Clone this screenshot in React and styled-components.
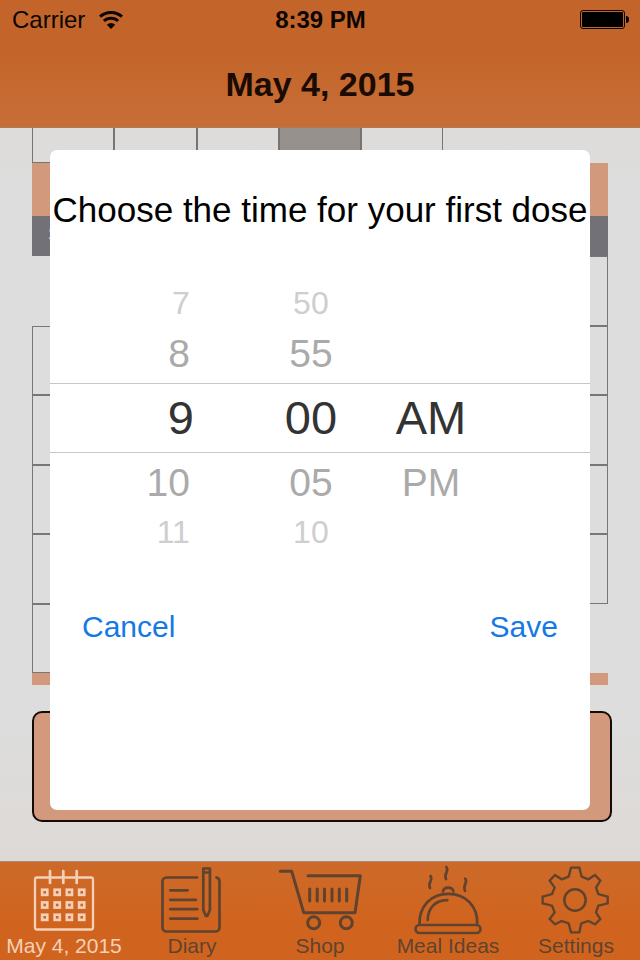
import React, { useState } from "react";
import styled, { createGlobalStyle } from "styled-components";

const GlobalStyle = createGlobalStyle`
  *,
  *::before {
    box-sizing: border-box;
  }
  body {
    margin: 0;
    font-family: "Liberation Sans", Arial, sans-serif;
  }
  button {
    padding: 0;
    border: none;
    background: none;
    font-family: inherit;
    cursor: pointer;
  }
`;

const Screen = styled.div`
  position: relative;
  display: flex;
  flex-direction: column;
  min-height: 100vh;
  background: linear-gradient(#ded9d5, #dddddd 20%, #dddddd 75%, #ded9d5 90%);
`;
const Header = styled.header`
  height: 128px;
  background: linear-gradient(#c3652a 40%, #c76e37);
  border-bottom: 1px solid #b07a58;
`;
const StatusBar = styled.div`
  display: grid;
  grid-template-columns: 1fr auto 1fr;
  align-items: center;
  height: 40px;
  padding: 0 11px 0 12px;
  font-size: 24px;
  color: #0c0502;
`;
const Carrier = styled.div`
  display: flex;
  align-items: center;
  gap: 14px;
`;
const Clock = styled.div`
  font-weight: bold;
`;
const Battery = styled.svg`
  justify-self: end;
`;
const Title = styled.h1`
  margin: 0;
  font-size: 34px;
  line-height: 88px;
  text-align: center;
  color: #1a0b03;
`;

const Main = styled.main`
  flex: 1;
  padding: 0 32px 39px;
`;
const Week = styled.div`
  display: grid;
  grid-template-columns: repeat(7, 1fr);
`;
const WeekCell = styled.div`
  height: 35px;
  border: 1px solid #777472;
  border-top: none;
  background: ${(props) => (props.$selected ? "#96918d" : "transparent")};
`;
const Band = styled.div`
  height: ${(props) => props.$height}px;
  background: #d3997d;
`;
const Weekdays = styled.div`
  height: 40px;
  padding-left: 16px;
  font-size: 20px;
  line-height: 36px;
  color: #dddddd;
  background: #727177;
`;
const Month = styled.div`
  display: grid;
  grid-template-columns: repeat(7, 1fr);
  grid-template-rows: repeat(6, 1fr);
  height: 417px;
`;
const Day = styled.div`
  border: 1px solid #777777;
  &:first-child {
    grid-column-start: 6;
  }
`;
const DoseButton = styled.button`
  display: block;
  width: calc(100% + 4px);
  height: 111px;
  margin-top: 26px;
  border: 2px solid #140b06;
  border-radius: 10px;
  background: #d3997d;
`;

const Modal = styled.div`
  position: absolute;
  top: 150px;
  left: 50px;
  right: 50px;
  padding: 40px 0 165px;
  border-radius: 7px;
  background: #ffffff;
`;
const ModalTitle = styled.h2`
  margin: 0;
  font-size: 35px;
  font-weight: normal;
  line-height: 40px;
  text-align: center;
  white-space: nowrap;
  color: #000000;
`;
const Picker = styled.div`
  position: relative;
  display: grid;
  grid-template-columns: 7fr 140px 100px 4fr;
  margin-top: 53px;
  &::before {
    content: "";
    position: absolute;
    top: 100px;
    left: 0;
    right: 0;
    height: 70px;
    border: solid #c8c8c8;
    border-width: 1px 0;
    pointer-events: none;
  }
`;
const Wheel = styled.div`
  display: flex;
  flex-direction: column;
  padding-right: ${(props) => (props.$align === "right" ? "47px" : "0")};
  text-align: ${(props) => props.$align || "center"};
`;

// rows get smaller and paler away from the selected one
const rowHeight = [70, 59, 41];
const rowFont = [47, 39, 32];
const rowColor = ["#333333", "#aaaaaa", "#cecece"];

const Option = styled.label`
  height: ${(props) => rowHeight[props.$distance]}px;
  padding-right: ${(props) => (props.$indent ? "4px" : "0")};
  font-size: ${(props) => rowFont[props.$distance]}px;
  line-height: ${(props) => rowHeight[props.$distance]}px;
  color: ${(props) => rowColor[props.$distance]};
  cursor: pointer;
`;
const Radio = styled.input`
  position: absolute;
  width: 1px;
  height: 1px;
  margin: 0;
  opacity: 0;
`;
const Actions = styled.div`
  display: flex;
  justify-content: space-between;
  margin-top: 56px;
  padding: 0 32px;
`;
const ActionButton = styled.button`
  font-size: 30px;
  line-height: 36px;
  color: #1479e6;
`;

const TabBar = styled.nav`
  display: grid;
  grid-template-columns: repeat(5, 1fr);
  border-top: 1px solid #a98a76;
  background: linear-gradient(#cd6a29, #d0641f 60%);
`;
const Tab = styled.button`
  display: flex;
  flex-direction: column;
  align-items: center;
  padding-bottom: 4px;
  font-size: 21px;
  line-height: 20px;
  white-space: nowrap;
  color: ${(props) => (props.$active ? "#f5d0b8" : "#5f432f")};
`;
const TabIcon = styled.svg`
  display: block;
  width: 96px;
  height: 74px;
  fill: none;
  stroke: currentColor;
  stroke-width: 2.7;
  stroke-linecap: round;
  stroke-linejoin: round;
`;

function CalendarIcon() {
  return (
    <TabIcon viewBox="0 0 96 74">
      <rect x="19" y="15.5" width="58" height="52" rx="2" strokeWidth="2.3" />
      <path d="M34 9v12M47.3 9v12M60.7 9v12" />
      {[30.3, 43, 55.3].map((y) =>
        [28.7, 41.2, 53.4, 65.7].map((x) => (
          <rect
            key={x + "-" + y}
            x={x - 2.6}
            y={y - 2.6}
            width="5.2"
            height="5.2"
            strokeWidth="2.6"
            strokeLinejoin="miter"
          />
        ))
      )}
    </TabIcon>
  );
}

function DiaryIcon() {
  return (
    <TabIcon viewBox="0 0 96 74">
      <path d="M53 15.500H22.500a4 4 0 0 0-4 4v46a4 4 0 0 0 4 4h49a4 4 0 0 0 4-4v-46q0-3.200-3-4" />
      <path d="M59.3 6.5h6.600v41.500l-2.600 6h-1.400l-2.600-6zM59.300 10.500h6.600" />
      <path d="M26.3 28.3h17.4M26.3 37.8h25.7M26.3 47.2h27M26.3 56.7h27" />
    </TabIcon>
  );
}

function CartIcon() {
  return (
    <TabIcon viewBox="0 0 96 74">
      <path
        d="M8.3 9.2h11.4l12 41.5H83l5.3-37H36"
        strokeWidth="3"
      />
      <path
        d="M37.7 27v12M45.2 27v12M52.5 27v12M60 27v12M67.3 27v12M74.7 27v12"
        strokeWidth="3"
      />
      <circle cx="41.7" cy="60.7" r="6" strokeWidth="3" />
      <circle cx="74.3" cy="60.7" r="6" strokeWidth="3" />
    </TabIcon>
  );
}

function MealIcon() {
  return (
    <TabIcon viewBox="0 0 96 74">
      <rect x="15.5" y="63" width="65" height="8" rx="4" />
      <path d="M19.5 62.5C19 44 31 31.8 48.3 31.8S78 44 77.2 62.5" />
      <path d="M27.7 58C28 46 35 38.4 47.3 38.2" />
      <path d="M43 29.5c0-5.3 10.4-5.3 10.4 0" />
      <path d="M30.5 14c3 4.2-3 6-.5 12M46.3 5c3.5 4.2-3 6-.3 12M65.3 16.7c3 4.2-3 6-.3 12" />
    </TabIcon>
  );
}

function GearIcon() {
  return (
    <TabIcon viewBox="444 21 288 222">
      <path
        d="M573 38h25l7 27 20 8 20-13 16 17-13 21 7 19 28 8v20l-28 7-7 20 13 20-16 16-20-10-21 7-6 27h-25l-7-27-21-7-20 10-16-16 15-20-8-20-28-7v-20l28-8 8-19-15-21 16-17 20 13 21-8z"
        strokeWidth="7"
        strokeLinejoin="miter"
      />
      <circle cx="585" cy="135" r="32" strokeWidth="7.5" />
    </TabIcon>
  );
}

const tabs = [
  { label: "May 4, 2015", Icon: CalendarIcon },
  { label: "Diary", Icon: DiaryIcon },
  { label: "Shop", Icon: CartIcon },
  { label: "Meal Ideas", Icon: MealIcon },
  { label: "Settings", Icon: GearIcon },
];

const hours = ["12", "1", "2", "3", "4", "5", "6", "7", "8", "9", "10", "11"];
const minutes = Array.from({ length: 12 }, (_, i) =>
  String(i * 5).padStart(2, "0")
);
const periods = ["AM", "PM"];

function TimeWheel({ name, values, start, loop, align }) {
  const [selected, setSelected] = useState(start);
  return (
    <Wheel role="radiogroup" aria-label={name} $align={align}>
      {[-2, -1, 0, 1, 2].map((offset) => {
        const distance = Math.abs(offset);
        let index = selected + offset;
        if (loop) index = (index + values.length) % values.length;
        if (!values[index]) {
          return <Option as="div" key={offset} $distance={distance} />;
        }
        return (
          <Option
            key={offset}
            $distance={distance}
            $indent={align === "right" && distance > 0}
          >
            <Radio
              type="radio"
              name={name}
              checked={offset === 0}
              onChange={() => setSelected(index)}
            />
            {values[index]}
          </Option>
        );
      })}
    </Wheel>
  );
}

function App() {
  const [tab, setTab] = useState(0);
  return (
    <Screen>
      <GlobalStyle />
      <Header>
        <StatusBar>
          <Carrier>
            Carrier
            <svg width="24" height="18" viewBox="0 0 24 18" fill="none">
              <path
                d="M1 5.7a16.5 16.5 0 0 1 22 0M4.9 10a10.5 10.5 0 0 1 14.2 0"
                stroke="currentColor"
                strokeWidth="3"
              />
              <path
                d="M12 18l-4.2-4.3a6 6 0 0 1 8.4 0z"
                fill="currentColor"
              />
            </svg>
          </Carrier>
          <Clock>8:39 PM</Clock>
          <Battery width="49" height="20" viewBox="0 0 49 20">
            <rect
              x="0.5"
              y="0.5"
              width="44"
              height="18"
              rx="2.5"
              fill="none"
              stroke="#0c0502"
            />
            <rect x="2" y="2" width="41" height="15" rx="1" fill="#000" />
            <path d="M46 6q3 0 3 3.500t-3 3.500z" fill="#000" />
          </Battery>
        </StatusBar>
        <Title>May 4, 2015</Title>
      </Header>

      <Main>
        <Week>
          {[0, 1, 2, 3, 4].map((item) => (
            <WeekCell key={item} $selected={item === 3} />
          ))}
        </Week>
        <Band $height={53} />
        <Weekdays>S</Weekdays>
        <Month>
          {Array.from({ length: 31 }, (_, i) => (
            <Day key={i} />
          ))}
        </Month>
        <Band $height={12} />
        <DoseButton type="button" />
      </Main>

      <TabBar>
        {tabs.map(({ label, Icon }, index) => (
          <Tab
            key={label}
            type="button"
            $active={index === tab}
            onClick={() => setTab(index)}
          >
            <Icon />
            {label}
          </Tab>
        ))}
      </TabBar>

      <Modal role="dialog" aria-labelledby="dose-title">
        <ModalTitle id="dose-title">
          Choose the time for your first dose
        </ModalTitle>
        <Picker>
          <TimeWheel name="hour" values={hours} start={9} loop align="right" />
          <TimeWheel name="minute" values={minutes} start={0} loop />
          <TimeWheel name="period" values={periods} start={0} />
        </Picker>
        <Actions>
          <ActionButton type="button">Cancel</ActionButton>
          <ActionButton type="button">Save</ActionButton>
        </Actions>
      </Modal>
    </Screen>
  );
}

export default App;
